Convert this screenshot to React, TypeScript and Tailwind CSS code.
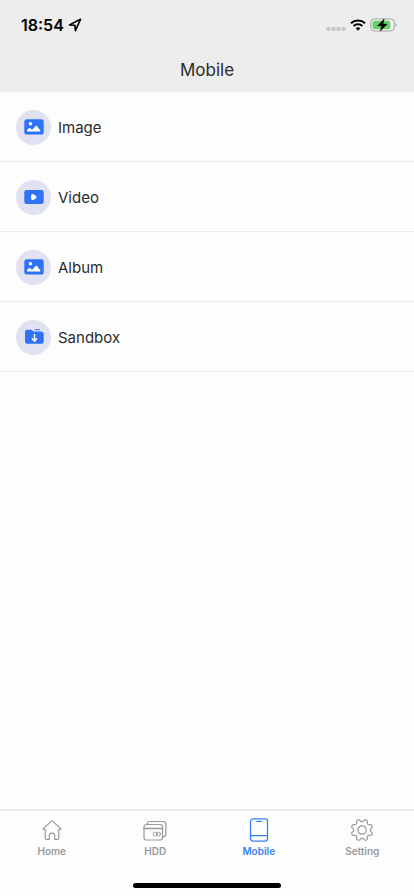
import clsx from "clsx";

const ImageIcon = () => (
  <svg width="20" height="16" viewBox="0 0 20 16" aria-hidden="true">
    <rect x="0.3" y="0.3" width="19.4" height="15.2" rx="2.6" fill="#2f72f6" />
    <circle cx="6.5" cy="4.8" r="1.8" fill="#fff" />
    <path
      d="M3.6 12.4c-.6 0-.9-.6-.6-1.1l1.4-1.7c.8-.8 1.5-.8 2.2-.1l1 .9c.4.4.8.3 1.1-.1l2.7-3.1c.6-.6 1.2-.6 1.8.1l3.1 4.2c.4.6.1.9-.5.9z"
      fill="#fff"
    />
  </svg>
);

const VideoIcon = () => (
  <svg width="20" height="16" viewBox="0 0 20 16" aria-hidden="true">
    <rect x="0.3" y="1" width="19.4" height="14" rx="2.2" fill="#2f72f6" />
    <path
      d="M8.6 6.4l2.4 1.8-2.4 1.4z"
      fill="#fff"
      stroke="#fff"
      strokeWidth="3"
      strokeLinejoin="round"
    />
  </svg>
);

const SandboxIcon = () => (
  <svg width="20" height="16" viewBox="0 0 20 16" aria-hidden="true">
    <path
      d="M1 3C1 1.5 1.8.8 3.1.8h3.7c.9 0 1.4.3 1.9.9l.6.8h7.6c2 0 2.8.9 2.8 2.7v6.7c0 2-.8 2.9-2.8 2.9h-13C1.900 14.800 1 13.900 1 11.900z"
      fill="#2f72f6"
    />
    <path d="M11 .7h4.500" stroke="#2f72f6" strokeLinecap="round" />
    <path
      d="M10.500 5.400v6.400M8.400 9.900l2.100 2.300 2.100-2.300"
      fill="none"
      stroke="#fff"
      strokeWidth="1.5"
      strokeLinecap="round"
      strokeLinejoin="round"
    />
  </svg>
);

const HomeIcon = () => (
  <svg width="24" height="24" viewBox="0 0 24 24" fill="none" stroke="currentColor" strokeWidth="1.2" strokeLinejoin="round" strokeLinecap="round" aria-hidden="true">
    <path d="M5.200 11.500H3.700c-.6 0-.7-.5-.3-.9l8-7.500c.4-.4.8-.4 1.200 0l8 7.500c.4.4.3.9-.3.9h-1.500v8.400c0 1-.5 1.500-1.500 1.500h-2.600v-3.900c0-1.500-1-2.400-2.700-2.400s-2.700.9-2.700 2.400v3.900H6.700c-1 0-1.500-.5-1.500-1.500z" />
  </svg>
);

const HddIcon = () => (
  <svg width="24" height="24" viewBox="0 0 24 24" fill="none" stroke="currentColor" strokeWidth="1.2" strokeLinecap="round" aria-hidden="true">
    <rect x="1" y="6.5" width="18.5" height="15.5" rx="2.5" />
    <path d="M1 10.500h18.500" strokeWidth="1.6" />
    <path d="M4 6.300l.5-1.500c.3-.9.8-1.300 1.800-1.300H20c1.900 0 2.800.9 2.800 2.700v10.300c0 1.300-.9 2.100-2.800 2.300" />
    <circle cx="12.2" cy="16" r="2" strokeWidth="0.9" />
    <circle cx="15.4" cy="16" r="2" strokeWidth="0.9" />
  </svg>
);

const MobileIcon = () => (
  <svg width="24" height="24" viewBox="0 0 24 24" fill="none" stroke="currentColor" strokeWidth="1.3" strokeLinecap="round" aria-hidden="true">
    <rect x="3.5" y="0.9" width="17" height="22.2" rx="2.4" />
    <path d="M3.500 17.700h17M9.800 3.300h4.700" />
  </svg>
);

// outline of a cog with eight rounded teeth, a gap at the top
const cogPath =
  Array.from({ length: 96 }, (_, i) => {
    const angle = (i / 96) * Math.PI * 2;
    const r = 9.6 - 1.5 * Math.tanh(1.4 * Math.cos(8 * angle));
    const x = 12 + r * Math.sin(angle);
    const y = 12 - r * Math.cos(angle);
    return `${i === 0 ? "M" : "L"}${x.toFixed(2)} ${y.toFixed(2)}`;
  }).join("") + "Z";

const SettingIcon = () => (
  <svg width="24" height="24" viewBox="0 0 24 24" fill="none" stroke="currentColor" strokeWidth="1.2" strokeLinejoin="round" aria-hidden="true">
    <path d={cogPath} />
    <circle cx="12" cy="12" r="4.2" />
  </svg>
);

const StatusBar = () => (
  <div className="flex h-12 items-center justify-between pl-[21px] pr-4 pt-[2px] text-black">
    <div className="flex items-center gap-1">
      <span className="text-base font-semibold">18:54</span>
      <svg width="14" height="14" viewBox="0 0 14 14" fill="none" stroke="currentColor" strokeWidth="1.6" strokeLinejoin="round" aria-label="Location">
        <path d="M12.500 1.300L1.500 6.900l5.400.3.5 5.500z" />
      </svg>
    </div>
    <div className="flex items-center gap-1">
      <svg width="20" height="14" viewBox="0 0 20 14" fill="#c6c6c6" aria-label="No signal">
        <rect x="0.5" y="9" width="4" height="4" rx="1.3" />
        <rect x="5.5" y="9" width="4" height="4" rx="1.3" />
        <rect x="10.5" y="9" width="4" height="4" rx="1.3" />
        <rect x="15.5" y="9" width="4" height="4" rx="1.3" />
      </svg>
      <svg width="16" height="12" viewBox="0 0 16 12" fill="none" stroke="currentColor" aria-label="Wi-Fi">
        <path d="M1 4.300a10.200 10.200 0 0 1 14 0" strokeWidth="2.2" />
        <path d="M3.600 7.100a6.400 6.400 0 0 1 8.800 0" strokeWidth="2" />
        <path d="M8 11.700L5.700 9.300a3.300 3.300 0 0 1 4.600 0z" fill="currentColor" stroke="none" />
      </svg>
      <svg width="28" height="14" viewBox="0 0 28 14" aria-label="Battery charging">
        <rect x="0.8" y="1" width="23.4" height="12" rx="3.5" fill="#f3f3f3" stroke="#a3a3a3" />
        <rect x="2.5" y="2.7" width="17.7" height="8.6" rx="2" fill="#65cf68" />
        <path d="M25.500 5v4c1.600-.6 1.600-3.400 0-4z" fill="#a3a3a3" />
        <path d="M14.200.8L7.500 7.900h4.200l-1.500 5.300 7-7.200h-4.200z" fill="#000" stroke="#000" strokeWidth="0.4" strokeLinejoin="round" />
      </svg>
    </div>
  </div>
);

const folders = [
  { name: "Image", Icon: ImageIcon },
  { name: "Video", Icon: VideoIcon },
  { name: "Album", Icon: ImageIcon },
  { name: "Sandbox", Icon: SandboxIcon },
];

const tabs = [
  { name: "Home", Icon: HomeIcon },
  { name: "HDD", Icon: HddIcon },
  { name: "Mobile", Icon: MobileIcon },
  { name: "Setting", Icon: SettingIcon },
];

export default function App() {
  const active = "Mobile";

  return (
    <div className="flex min-h-screen flex-col bg-[#fdfdfd] font-['Inter',sans-serif]">
      <header className="bg-[#ededed]">
        <StatusBar />
        <h1 className="h-11 text-center text-[17px] leading-[45px] text-[#2b2b2b]">Mobile</h1>
      </header>

      <main className="flex-1">
        <ul>
          {folders.map(({ name, Icon }) => (
            <li key={name} className="border-b border-[#eaeaea]">
              <button className="flex h-[69px] w-full items-center gap-[7px] px-4 pt-px text-left">
                <span className="flex size-[35px] items-center justify-center rounded-full bg-[#e0e2f2]">
                  <Icon />
                </span>
                <span className="text-[15px] leading-[25px] text-[#2b2b2b]">{name}</span>
              </button>
            </li>
          ))}
        </ul>
      </main>

      <footer className="border-t-2 border-[#ededed]">
        <nav className="grid grid-cols-4">
          {tabs.map(({ name, Icon }) => (
            <a
              key={name}
              href={`#${name.toLowerCase()}`}
              aria-current={name === active ? "page" : undefined}
              className={clsx(
                "flex flex-col items-center gap-[3px] pt-[7px]",
                name === active ? "text-[#3b82f6]" : "text-[#999999]"
              )}
            >
              <Icon />
              <span className="text-[10px] font-semibold leading-[12px]">{name}</span>
            </a>
          ))}
        </nav>
        <div className="mx-auto mb-2 mt-[26px] h-[5px] w-[148px] rounded-full bg-black" />
      </footer>
    </div>
  );
}
